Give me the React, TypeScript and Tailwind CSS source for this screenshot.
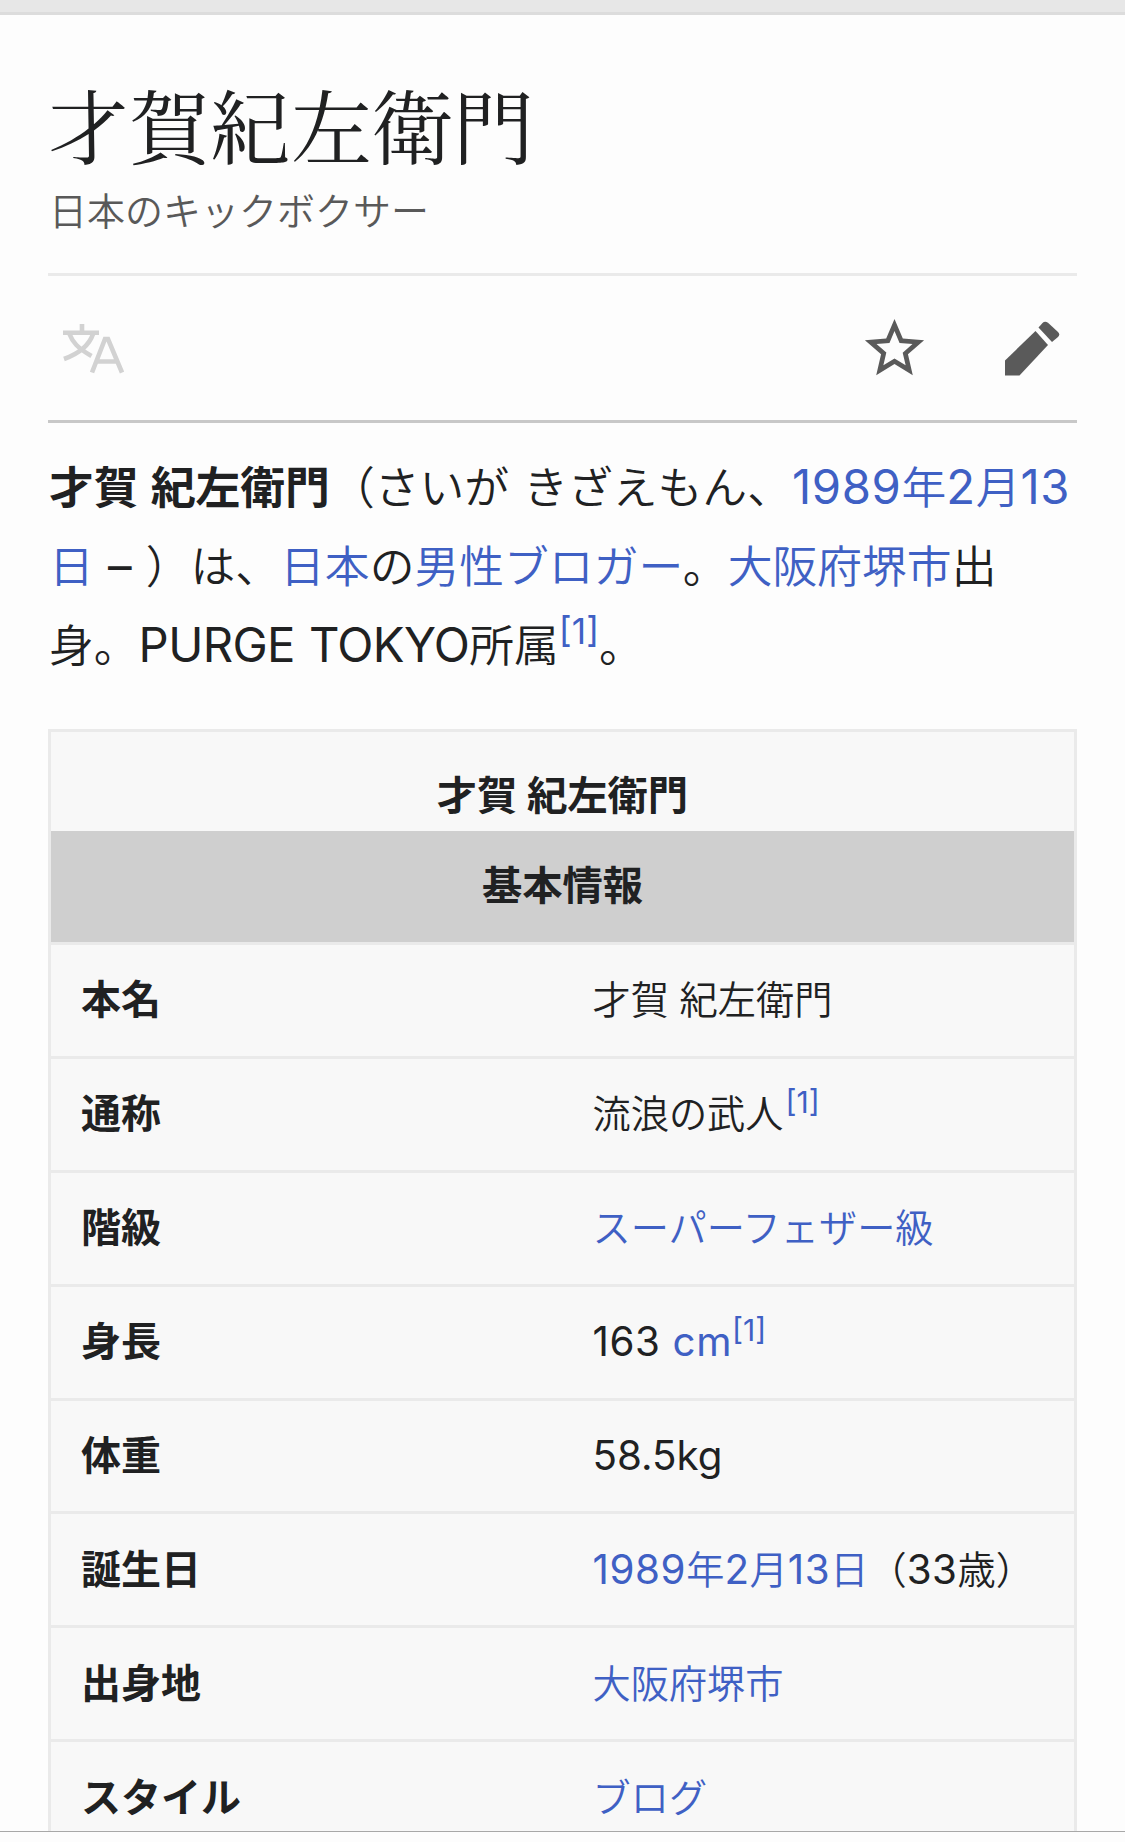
import type { ReactNode } from "react";

const Link = ({ children }: { children: ReactNode }) => (
  <a className="text-[#3f60c4]">{children}</a>
);

/* Latin runs are set slightly larger than the Japanese text around them. */
const Lat = ({ children }: { children: ReactNode }) => (
  <span className="text-[1.055em] font-normal">{children}</span>
);

const Num = ({ children }: { children: ReactNode }) => (
  <span className="text-[1.055em] font-normal tracking-[0.6px]">{children}</span>
);

const Ref = () => (
  <sup className="relative top-[-0.5em] align-baseline text-[0.79em] leading-none font-normal text-[#3f60c4]">[1]</sup>
);

const rows: { label: string; value: ReactNode }[] = [
  { label: "本名", value: "才賀 紀左衛門" },
  { label: "通称", value: <>流浪の武人<span className="ml-[2px]"><Ref /></span></> },
  { label: "階級", value: <Link>スーパーフェザー級</Link> },
  { label: "身長", value: <><Num>163 <Link>cm</Link></Num><Ref /></> },
  { label: "体重", value: <Lat>58.5kg</Lat> },
  {
    label: "誕生日",
    value: (
      <>
        <Link><Num>1989</Num>年<Num>2</Num>月<Num>13</Num>日</Link>（<Num>33</Num>歳）
      </>
    ),
  },
  { label: "出身地", value: <Link>大阪府堺市</Link> },
  { label: "スタイル", value: <Link>ブログ</Link> },
];

function LanguageIcon() {
  return (
    <svg width="62" height="52" viewBox="0 0 62 52" fill="none" stroke="#d2d2d2" strokeWidth="4.6">
      <path d="M20 2v8M1 10.700h36M7.500 12c3 8 8 14 22 22M31 12c-3 9-10 18-29 25" />
      <path d="M30 50.500 43 17h3L60 50.500M35 39.500h20" />
    </svg>
  );
}

function StarIcon() {
  return (
    <svg width="71" height="71" viewBox="0 0 24 24" fill="#5a5a5a">
      <path d="M22 9.240l-7.190-.62L12 2 9.190 8.630 2 9.240l5.460 4.730L5.820 21 12 17.270 18.180 21l-1.630-7.030L22 9.240zM12 15.400l-3.760 2.270 1-4.280-3.320-2.880 4.380-.38L12 6.100l1.710 4.040 4.380.38-3.320 2.880 1 4.280L12 15.400z" />
    </svg>
  );
}

function PencilIcon() {
  return (
    <svg width="55" height="55" viewBox="0 0 55 55" fill="#5a5a5a">
      <path d="M0 54.500V39.500L30.500 10 43 24 14.500 54.500z" />
      <path d="M33.500 6.500 37.500 2Q40 -.5 43 1.800L53 11Q55.500 13.500 53 16L47 21z" />
    </svg>
  );
}

export default function App() {
  return (
    <div className="flex h-[1842px] w-[1125px] flex-col overflow-hidden bg-[#fdfdfd] font-['Inter','Noto_Sans_CJK_JP',sans-serif] font-[350] text-[#202122]">
      <div className="h-[15px] shrink-0 border-b-[3px] border-[#dcdcdc] bg-[#e7e7e7]" />
      <main className="flex min-h-0 flex-1 flex-col overflow-hidden px-12">
        <header className="h-[261px] shrink-0 border-b-[3px] border-[#eaeaea] pt-[58px]">
          <h1 className="font-['Noto_Serif_CJK_JP','Noto_Sans_CJK_JP',serif] text-[81px] leading-[100px] font-normal">才賀紀左衛門</h1>
          <p className="mt-[13px] pl-px text-[38px] leading-[50px] text-[#595959]">日本のキックボクサー</p>
        </header>
        <nav className="flex h-[147px] shrink-0 items-center border-b-[3px] border-[#c8c8c8] pr-[17px] pl-[14px]">
          <LanguageIcon />
          <div className="ml-auto flex items-center gap-[75px]">
            <StarIcon />
            <PencilIcon />
          </div>
        </nav>
        <div className="h-[306px] shrink-0 pt-[25px] pl-px text-[44.800px] leading-[78px] [word-spacing:1.5px] whitespace-nowrap">
          <p>
            <b className="font-bold">才賀 紀左衛門</b>（さいが きざえもん、<Link><Num>1989</Num>年<Num>2</Num>月<Num>13</Num></Link>
          </p>
          <p>
            <Link>日</Link> <Lat>–</Lat> ）は、<Link>日本</Link>の<Link>男性ブロガー</Link>。<Link>大阪府堺市</Link>出
          </p>
          <p>
            身。<span className="text-[1.055em] font-normal tracking-[-0.65px]">PURGE TOKYO</span>所属<Ref />。
          </p>
        </div>
        <section className="min-h-0 flex-1 border-x-[3px] border-t-[3px] border-[#eaeaea] bg-[#f8f8f8]">
          <h2 className="flex h-[99px] items-end justify-center pb-[5px] text-[40.300px] leading-[60px] font-bold">才賀 紀左衛門</h2>
          <h3 className="flex h-[111px] items-center justify-center bg-[#cfcfcf] pb-px text-[40.300px] font-bold">基本情報</h3>
          <dl className="border-t-[3px] border-[#eaeaea]">
            {rows.map((r) => (
              <div key={r.label} className="flex h-[113.900px] items-center border-b-[3px] border-[#eaeaea] whitespace-nowrap">
                <dt className="w-[541.500px] pl-[30px] text-[40px] leading-[60px] font-bold">{r.label}</dt>
                <dd className="text-[38.200px] leading-[60px]">{r.value}</dd>
              </div>
            ))}
          </dl>
        </section>
      </main>
      <footer className="h-[11px] shrink-0 border-t border-[#a8a8a8] bg-[#fdfdfd]" />
    </div>
  );
}
